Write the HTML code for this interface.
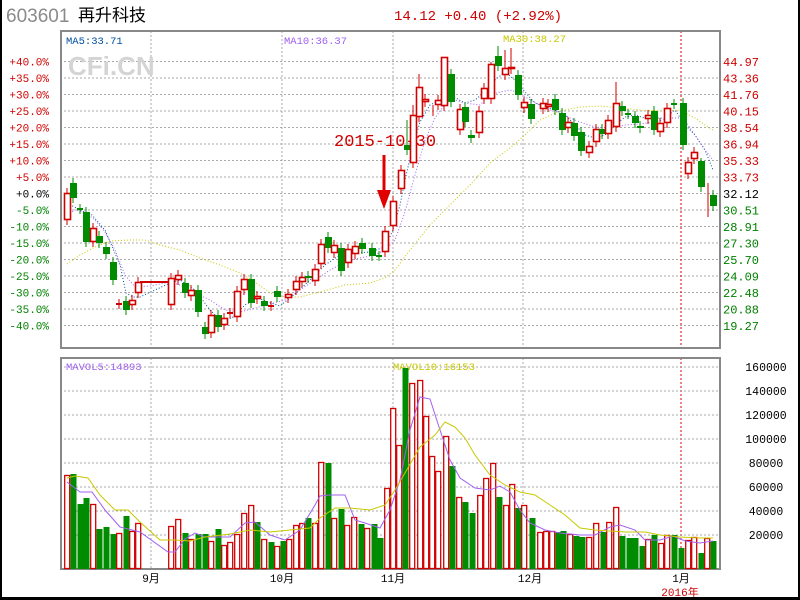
<!DOCTYPE html>
<html><head><meta charset="utf-8"><style>
html,body{margin:0;padding:0;background:#fff}
#w{position:relative;width:796px;height:597px;border-left:2px solid #000;border-right:2px solid #000;border-bottom:3px solid #000;overflow:hidden;font-family:"Liberation Mono","Noto Sans CJK SC",monospace}
svg{position:absolute;left:-2px;top:0}
</style></head><body><div id="w">
<svg id="s" width="800" height="600" xmlns="http://www.w3.org/2000/svg" font-family="Liberation Mono, Noto Sans CJK SC, monospace">
<text x="6" y="22" font-family="Liberation Sans, sans-serif" font-size="19" fill="#8a8a8a">603601</text>
<text x="78" y="21" font-family="Liberation Sans, Noto Sans CJK SC, sans-serif" font-size="17" fill="#000">再升科技</text>
<text x="394" y="20" font-size="14" fill="#d00000">14.12 +0.40 (+2.92%)</text>
<g id="g"></g>
</svg></div>
<script>
var NS="http://www.w3.org/2000/svg",G=document.getElementById("g"),h="";
function L(x1,y1,x2,y2,c,w,d){h+='<line x1="'+x1+'" y1="'+y1+'" x2="'+x2+'" y2="'+y2+'" stroke="'+c+'" stroke-width="'+(w||1)+'"'+(d?' stroke-dasharray="'+d+'"':'')+'/>';}
function T(x,y,t,c,s,a){h+='<text x="'+x+'" y="'+y+'" fill="'+c+'" font-size="'+(s||11)+'"'+(a?' text-anchor="'+a+'"':'')+'>'+t+'</text>';}
function P(pts,c,d,w){h+='<polyline fill="none" stroke="'+c+'" stroke-width="'+(w||1)+'"'+(d?' stroke-dasharray="'+d+'"':'')+' points="'+pts.map(function(p){return p.join(",")}).join(" ")+'"/>';}
// grids
for(var i=0;i<17;i++){var y=61.5+i*16.5;L(60,y,720,y,"#aaa",1,"2,2");}
[151,282,393,523].forEach(function(x){L(x,31,x,348,"#aaa",1,"2,2");L(x,358,x,569,"#aaa",1,"2,2");});
L(681,31,681,348,"#d00",1,"2,2");L(681,358,681,569,"#d00",1,"2,2");
for(var i=0;i<8;i++){L(60,367+i*24,720,367+i*24,"#aaa",1,"2,2");}
h+='<rect x="61" y="31" width="659" height="317" fill="none" stroke="#888" stroke-width="2"/>';
h+='<rect x="61" y="358" width="659" height="211" fill="none" stroke="#888" stroke-width="2"/>';
// left labels
var lab=["+40.0%","+35.0%","+30.0%","+25.0%","+20.0%","+15.0%","+10.0%","+5.0%","+0.0%","-5.0%","-10.0%","-15.0%","-20.0%","-25.0%","-30.0%","-35.0%","-40.0%"];
var rl=["44.97","43.36","41.76","40.15","38.54","36.94","35.33","33.73","32.12","30.51","28.91","27.30","25.70","24.09","22.48","20.88","19.27"];
lab.forEach(function(t,i){var c=i<8?"#d00000":(i==8?"#000":"#008000");T(49,65.5+i*16.5,t,c,11,"end");T(723,66+i*16.5,rl[i],c,12);});
["160000","140000","120000","100000","80000","60000","40000","20000"].forEach(function(t,i){T(766,371+i*24,t,"#000",11.5,"middle");});
T(66,44,"MA5:33.71","#0050a0",10.5);T(284,44,"MA10:36.37","#a060f0",10.5);T(503,42,"MA30:38.27","#c8c800",10.5);
T(66,370,"MAVOL5:14893","#a060f0",10.5);T(393,370,"MAVOL10:16153","#c8c800",10.5);
h+='<text x="68" y="75" font-family="Liberation Sans, sans-serif" font-weight="bold" font-size="26" fill="#d4d4d4">CFi.CN</text>';
T(151,582,"9月","#000",11,"middle");T(282,582,"10月","#000",11,"middle");T(393,582,"11月","#000",11,"middle");T(530,582,"12月","#000",11,"middle");T(681,582,"1月","#000",11,"middle");T(680,596,"2016年","#d00000",11,"middle");
T(334,146,"2015-10-30","#d00000",17);
L(384,155,384,195,"#e00000",3);h+='<polygon points="377,190 391,190 384,209" fill="#e00000"/>';
// MA lines
P([[67,203],[80,210],[92,215],[105,230],[120,265],[126,293],[133,297],[140,297],[170,283],[180,280],[195,290],[210,310],[220,320],[232,318],[245,305],[258,298],[268,302],[280,306],[295,294],[310,280],[325,265],[340,255],[355,253],[370,252],[385,247],[393,230],[400,205],[405,180],[412,150],[420,122],[430,105],[440,100],[452,96],[465,103],[475,100],[485,92],[495,80],[505,72],[515,80],[525,92],[535,103],[545,107],[555,110],[565,115],[575,125],[585,135],[595,138],[605,135],[615,125],[625,117],[635,115],[645,118],[655,118],[665,118],[675,110],[685,125],[695,135],[705,150],[713,170]],"#0050a0","1,2");
P([[67,215],[75,210],[85,212],[95,220],[105,232],[115,250],[125,275],[135,287],[150,286],[170,282],[180,285],[195,293],[210,300],[225,310],[240,312],[255,308],[270,304],[285,300],[300,290],[315,280],[330,270],[345,262],[360,258],[375,255],[385,250],[395,240],[405,212],[415,175],[425,140],[435,118],[445,104],[455,100],[465,103],[480,105],[490,95],[500,92],[510,90],[520,93],[530,100],[540,105],[550,110],[560,112],[570,118],[580,122],[595,127],[610,128],[625,125],[640,124],[655,122],[670,118],[683,118],[695,135],[705,150],[713,160]],"#a060f0","1,2");
P([[67,264],[80,255],[95,247],[110,241],[130,240],[145,240],[160,245],[180,250],[200,258],[220,265],[240,273],[255,282],[270,293],[285,297],[300,297],[320,292],[345,285],[370,283],[385,278],[395,270],[410,250],[430,225],[450,205],[470,185],[490,163],[510,148],[525,135],[540,120],[560,111],[580,107],[600,106],[620,108],[640,110],[660,111],[680,110],[695,118],[705,125],[713,130]],"#c8c800","1,2");
// candles [x,top,bottom,up(1)/down(0)]
var C=[[67,193,220,1],[73,183,198,0],[80,209,209,2],[86,212,242,0],[93,228,242,1],[99,236,243,0],[106,247,254,0],[113,262,280,0],[119,304,304,3],[126,301,310,0],[132,300,305,1],[138,282,293,1],[171,278,305,1],[178,275,280,1],[185,283,293,0],[191,290,296,1],[198,290,312,0],[205,327,334,0],[211,315,333,1],[218,315,327,0],[224,318,325,1],[230,313,313,3],[237,291,317,1],[244,279,290,1],[251,279,303,0],[257,296,299,1],[264,301,306,0],[271,306,306,3],[277,291,297,0],[288,294,298,1],[296,281,290,1],[302,277,282,1],[308,276,278,0],[315,269,281,1],[321,244,264,1],[328,237,248,0],[334,245,253,1],[341,248,271,0],[348,249,263,1],[355,246,254,1],[362,243,249,0],[372,248,256,0],[379,256,256,2],[385,231,252,1],[393,201,226,1],[401,170,189,1],[407,145,150,0],[413,115,163,1],[419,87,117,1],[425,99,102,1],[433,110,111,3],[438,100,105,1],[444,57,106,1],[451,74,102,0],[460,109,130,1],[465,107,122,0],[471,135,138,0],[479,111,133,1],[484,88,99,1],[491,64,99,1],[498,56,66,0],[505,68,75,1],[511,67,69,1],[518,75,95,0],[524,102,108,1],[531,104,119,0],[543,103,109,1],[548,104,107,1],[555,99,110,0],[562,113,130,0],[568,122,128,1],[574,123,136,0],[581,132,151,0],[589,146,153,1],[596,129,142,1],[602,129,134,0],[608,120,134,1],[616,103,127,1],[622,106,111,0],[628,114,114,2],[635,116,123,0],[640,126,128,0],[648,115,119,1],[654,111,130,0],[660,123,132,1],[667,108,123,1],[674,104,104,2],[683,103,145,0],[688,162,174,1],[694,152,159,1],[701,161,187,0],[708,177,178,1],[713,195,206,0]];
var hi={407:120,413:103,419:74,444:57,491:62,498:46,505:50,511:48,413:105,616:82,701:158,708:217,383:0};
L(140,282,168,282,"#d00000",2);
C.forEach(function(c){var x=c[0],t=c[1],b=c[2],k=c[3];var col=(k==0||k==2)?"#008c00":"#d00000";
 var wt=hi[x]||t-5,wb=b+5;L(x,wt,x,wb,col,1);
 if(t==b){L(x-3,t,x+3,t,col,2);}
 else if(k==0){h+='<rect x="'+(x-3)+'" y="'+t+'" width="7" height="'+(b-t)+'" fill="'+col+'"/>';}
 else{h+='<rect x="'+(x-2.5)+'" y="'+(t+.5)+'" width="6" height="'+(b-t-1)+'" fill="#fff" stroke="'+col+'" stroke-width="1.6"/>';}
});
// volume [x,top,up]
var V=[[67,475,1],[73,474,0],[80,504,0],[86,498,0],[93,504,1],[99,529,0],[106,527,0],[113,534,0],[119,533,1],[126,516,0],[132,531,1],[138,523,1],[171,526,1],[178,519,1],[185,533,0],[191,539,1],[198,534,0],[205,534,0],[211,541,1],[218,529,0],[224,545,1],[230,542,1],[237,534,1],[244,513,1],[251,505,1],[257,522,0],[264,539,1],[271,542,0],[277,546,1],[283,541,0],[289,539,1],[296,525,1],[302,523,1],[308,518,0],[315,523,1],[321,462,1],[328,463,0],[334,518,1],[341,509,0],[347,525,1],[354,517,1],[361,524,0],[367,528,1],[374,524,0],[380,538,0],[387,488,1],[393,408,1],[399,445,1],[405,368,0],[412,383,1],[420,380,1],[426,416,1],[432,456,1],[438,471,1],[446,436,1],[452,466,0],[459,497,1],[465,502,0],[472,513,0],[480,495,1],[486,478,1],[493,463,1],[499,497,0],[506,505,1],[512,484,1],[518,508,0],[524,505,1],[532,518,0],[540,532,1],[546,531,1],[552,531,1],[558,532,0],[563,531,0],[570,534,1],[576,536,0],[582,537,0],[589,537,1],[596,523,1],[603,532,0],[609,522,1],[616,507,1],[622,536,0],[629,538,0],[635,538,0],[642,546,0],[648,539,1],[654,535,0],[661,543,1],[667,535,1],[674,535,0],[681,548,0],[688,540,1],[694,537,1],[701,553,0],[707,538,1],[713,541,0]];
V.forEach(function(v){var x=v[0],t=v[1];if(v[2]==0)h+='<rect x="'+(x-2.5)+'" y="'+t+'" width="6" height="'+(569-t)+'" fill="#008c00"/>';else h+='<rect x="'+(x-2.3)+'" y="'+(t+.5)+'" width="5" height="'+(568-t)+'" fill="#fff" stroke="#d00000" stroke-width="1.3"/>';});
P([[67,482],[80,492],[92,492],[105,510],[120,527],[132,530],[140,532],[168,552],[175,552],[185,539],[195,533],[205,537],[215,537],[230,537],[245,523],[255,522],[270,535],[285,540],[300,530],[315,505],[320,496],[330,495],[345,495],[355,520],[365,523],[380,528],[390,510],[400,480],[410,430],[420,397],[430,399],[440,430],[450,460],[460,478],[475,488],[490,490],[500,486],[510,492],[520,510],[530,523],[545,530],[560,533],[580,535],[595,535],[610,527],[620,525],[635,530],[645,540],[660,540],[673,536],[685,541],[700,543],[713,541]],"#a060f0");
P([[67,478],[75,476],[88,478],[100,495],[115,510],[128,510],[140,522],[160,540],[175,540],[190,541],[205,537],[230,534],[250,530],[270,532],[290,530],[310,528],[320,518],[335,508],[350,508],[370,510],[385,505],[395,490],[405,473],[420,447],[435,435],[445,422],[455,427],[465,438],[475,455],[490,475],[505,485],[520,492],[535,495],[550,505],[565,515],[580,528],[595,530],[610,531],[625,532],[645,532],[660,535],[680,537],[700,538],[713,538]],"#c8c800");
G.innerHTML=h;
</script>
</body></html>
